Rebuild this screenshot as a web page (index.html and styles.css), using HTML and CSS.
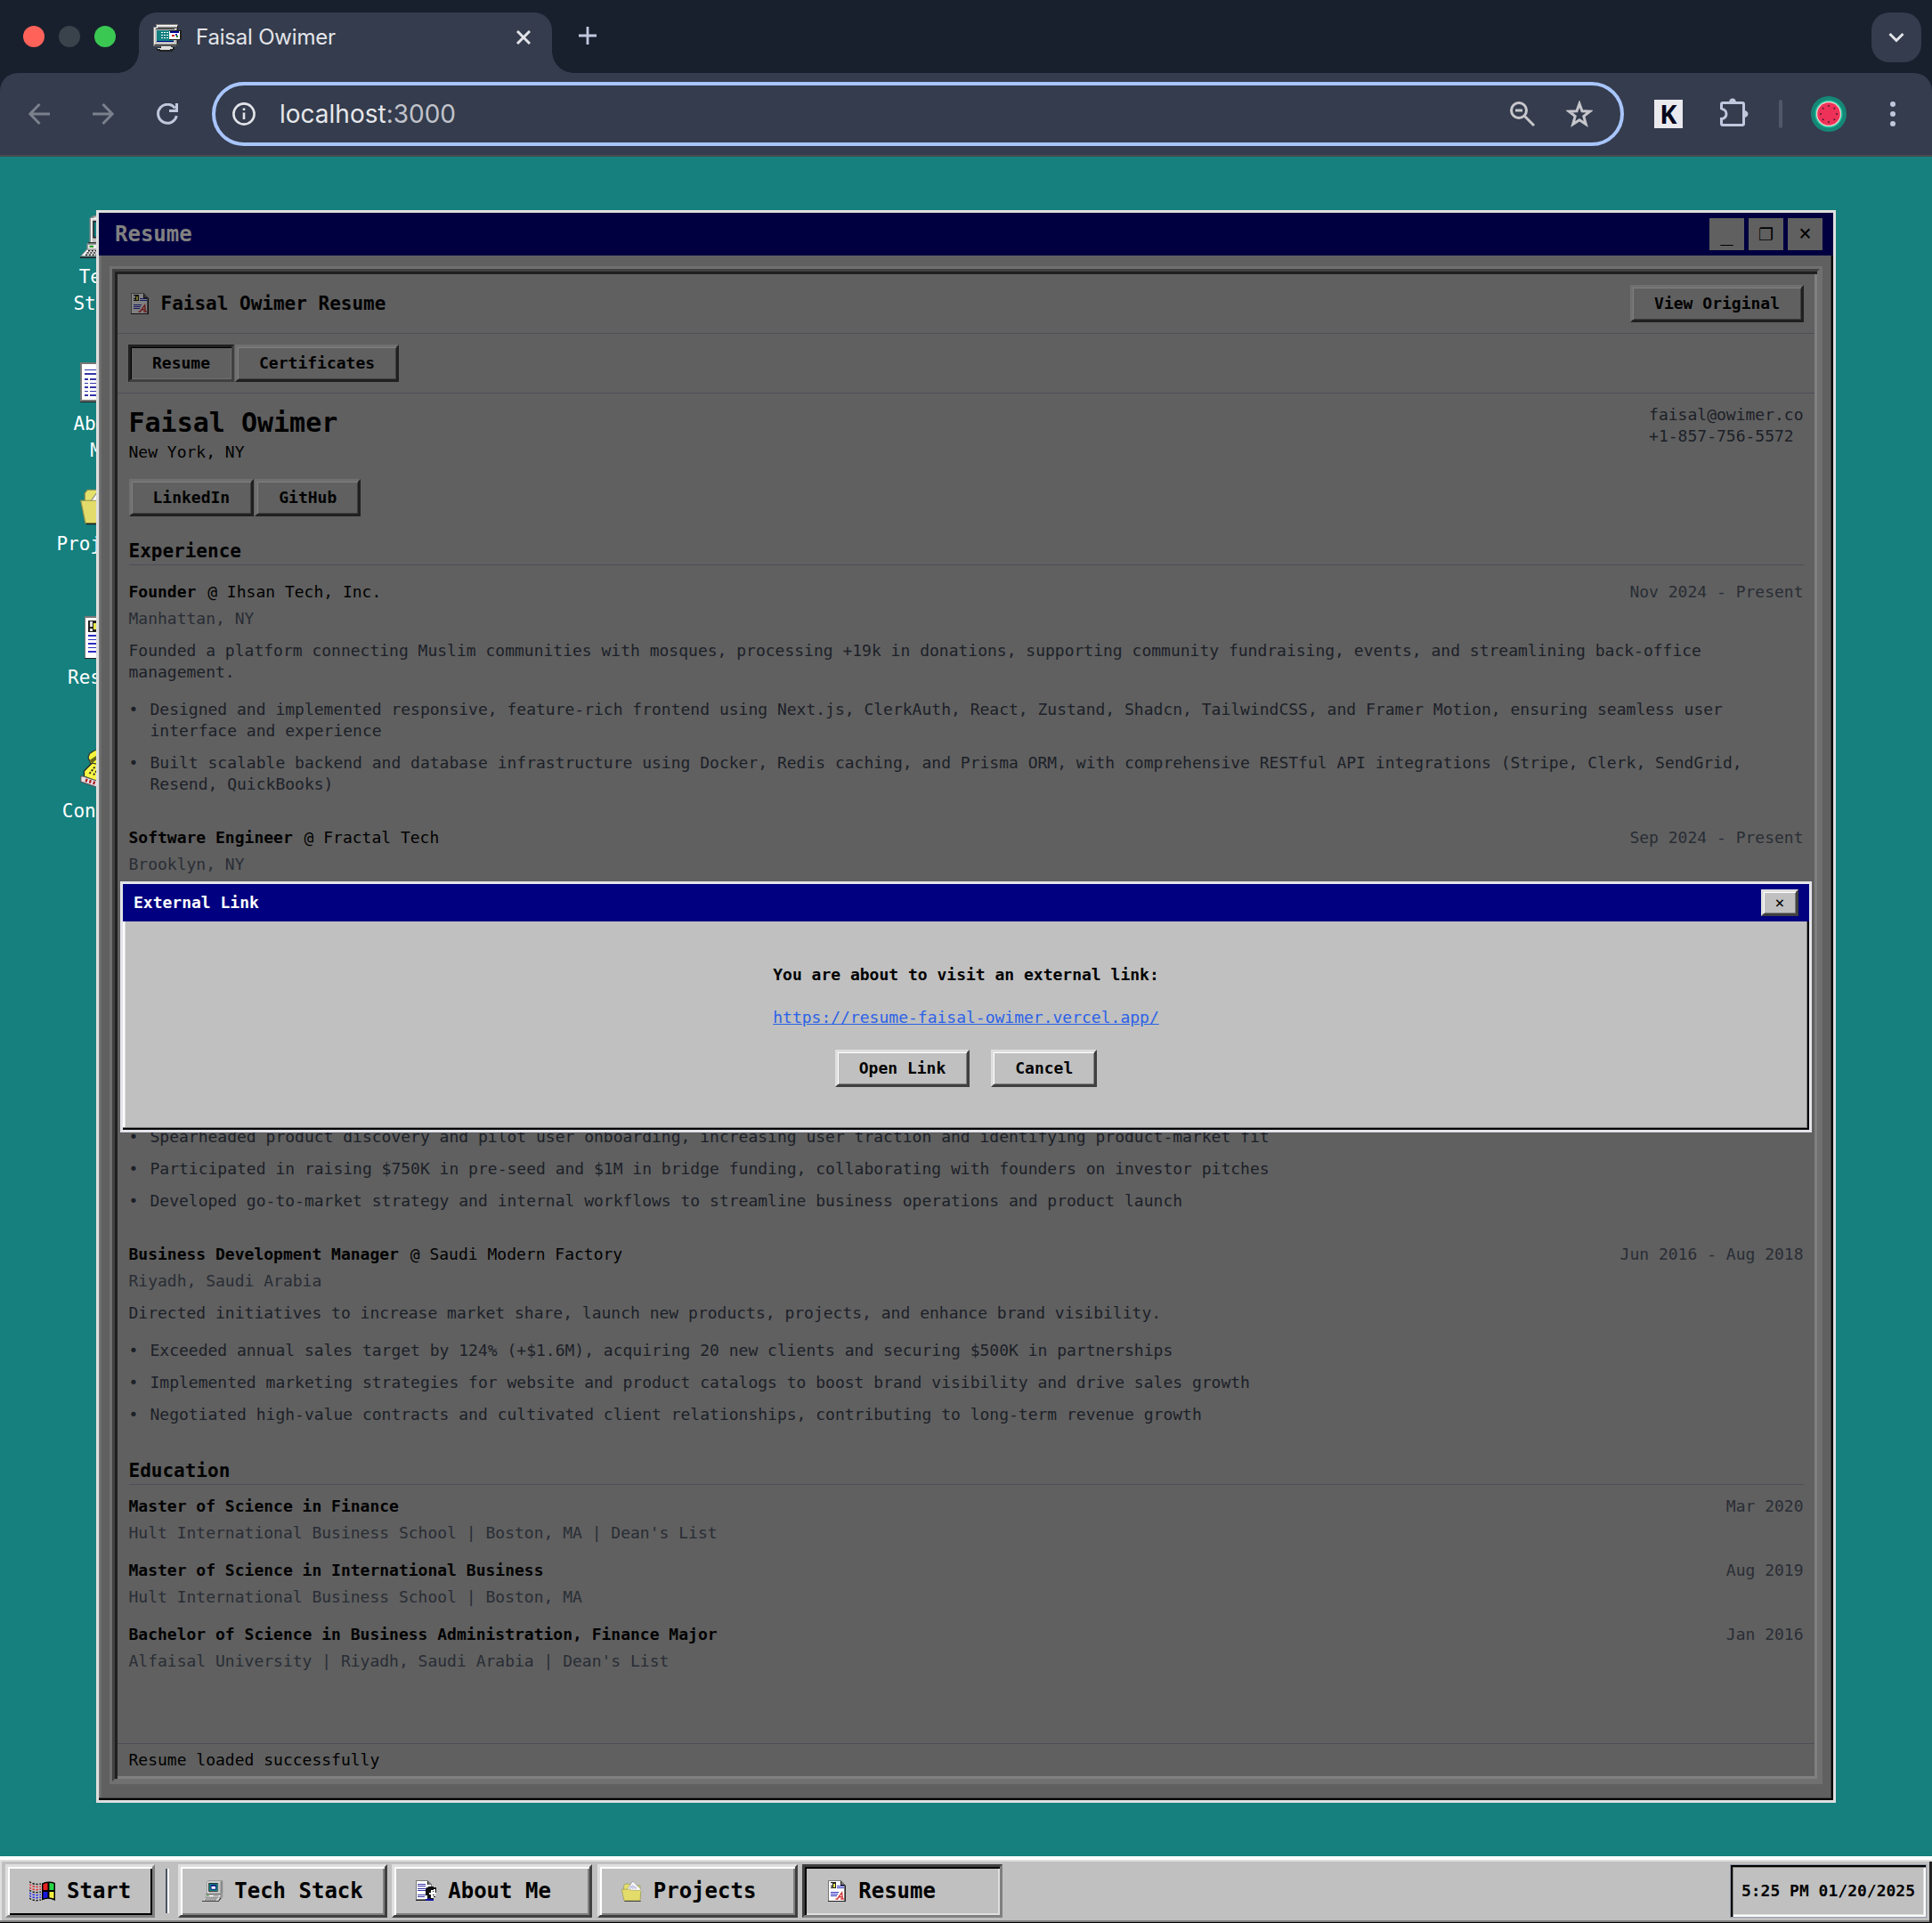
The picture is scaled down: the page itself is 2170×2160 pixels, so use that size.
FILE: index.html
```html
<!DOCTYPE html>
<html lang="en">
<head>
<meta charset="utf-8">
<title>Faisal Owimer</title>
<link rel="stylesheet" href="styles.css">
</head>
<body>
<svg class="sprite" aria-hidden="true">
  <symbol id="i-computer" viewBox="0 0 32 32">
    <path fill="#8a8a8a" d="M7 2l3-2h19l2 1v17l-3 3H7z"/>
    <path fill="#f4f4f4" d="M8 2h19v18H8z"/>
    <path fill="#c2c2c2" d="M9 3h18v17H9z"/>
    <path fill="#dcdcdc" d="M10 2l1-1h18l-1 1z"/>
    <path fill="#222" d="M9.500 4h14v13h-14z"/>
    <path fill="#138080" d="M10.500 5H23v11H10.500z"/>
    <path fill="#000080" d="M13 7h8v7h-8z"/><path fill="#fff" d="M14 9h6v4h-6z"/>
    <path fill="#333" d="M6 20h22v1H6z"/>
    <path fill="#999" d="M5 21h23l3-4v8l-3 4H5z"/>
    <path fill="#ececec" d="M6 22h21v3H6z"/><path fill="#2a9c2a" d="M7 22.500h3v1.500H7z"/><path fill="#777" d="M17 23h8v1h-8z"/>
    <path fill="#f0f0f0" stroke="#888" stroke-width=".6" d="M5 25.500h22l-3 5H0.500z"/>
    <path fill="none" stroke="#222" stroke-width="1" stroke-dasharray="1.500 1" d="M6 26.500h18M5 28h18M4 29.500h17"/>
    <path fill="#222" d="M0 31h24l4-5.500v2L24.500 32H0z"/>
  </symbol>
  <symbol id="i-about" viewBox="0 0 32 32" shape-rendering="crispEdges">
    <path fill="#777" d="M0 0h18l6 6v23H0z"/>
    <path fill="#fff" d="M1 1h16v6h6v21H1z"/><path fill="#222" d="M17 1h1v5h6v1h-7zM0 29h20v1H0z"/>
    <path fill="#3434a8" d="M3 5h11v1H3zM3 8h12v1H3zM3 12h3v1H3zM7 12h10v1H7zM3 15h3v1H3zM7 15h8v1H7zM3 18h3v1H3zM7 18h7v1H7zM3 21h3v1H3zM7 21h7v1H7zM3 24h3v1H3zM7 24h6v1H7z"/>
    <path fill="#111" d="M18 9h8v1h4v3h1v6h-2v6h-3v3h-9v-5h-3V13h2v-2h2z"/>
    <path fill="#fff" d="M23 14h4v-1h2v5h2v2h-2v4h-3v2h-4v-5h-2v-3h3z"/><path fill="#222" d="M25 16h2v1h-2zM25 21h3v1h-3z"/>
    <path fill="#1414a0" d="M15 28h3v-1h3v1h6v2H15z"/>
  </symbol>
  <symbol id="i-folder" viewBox="0 0 32 32">
    <path fill="#e4e06c" stroke="#8c8c50" stroke-width=".8" d="M3.500 8l2-2.500h7l2 2.500H28v20H3.500z"/>
    <path fill="#fff" stroke="#888" stroke-width=".8" d="M8 14L17 1.500l14 14-3 5H8z"/>
    <path fill="none" stroke="#4444a0" stroke-width="1" stroke-dasharray="1 1" d="M14 8h6M13 10h9M12 12h12"/>
    <path fill="#e3dc6a" stroke="#95924a" stroke-width=".8" d="M.5 13.500h12l2 1.500h14.500l-1 15.500H4z"/>
    <path fill="#222" d="M4 30.500h25v1H5z"/>
  </symbol>
  <symbol id="i-resume" viewBox="0 0 32 32" shape-rendering="crispEdges">
    <path fill="#777" d="M3 0h19l7 7v24H3z"/><path fill="#fff" d="M4 1h18v6h5v24H4z"/>
    <path fill="#222" d="M21 1h2v5h5v2h-7zM3 31h26v1H3zM28 8h1v23h-1z"/>
    <path fill="#222" d="M6 3h9v9H6z"/><path fill="#ddd" d="M7 4h2v4H7zM7 9h2v2H7z"/><path fill="#e8e84c" d="M10 5h3v5h-3z"/>
    <path fill="#2c2cc0" d="M16 8h10v1H16zM16 11h10v1H16zM6 14h20v1H6zM6 17h12v1H6zM6 20h11v1H6zM6 23h10v1H6zM6 26h8v1H6z"/>
    <path shape-rendering="auto" fill="none" stroke="#d43838" stroke-width="1.800" d="M16.500 28l7-9.500 1 9.500M14 28h4M21.500 28h5M19 25h5"/>
  </symbol>
  <symbol id="i-phone" viewBox="0 0 32 32">
    <path fill="#f4f43c" stroke="#333" stroke-width=".8" d="M6 6l1-3 4-2.500h11l7 5-1 6-5-1-3-3-6 1-2 3-4-1z"/>
    <path fill="#66661a" d="M7 8l6-4v3l-4 3z"/>
    <path fill="#f7f545" stroke="#222" stroke-width=".8" d="M9 10l16 4 3 11-5 3L3 20v-4z"/>
    <path fill="none" stroke="#222" stroke-width="1.200" stroke-dasharray="1.500 1" d="M11 13l-4 5M14 14l-4 5M17 15l-4 5"/>
    <path fill="#e6e0e6" stroke="#555" stroke-width=".8" d="M.5 20h2l21 7 6-2v3l-7 3.500L.5 24z"/>
    <path fill="none" stroke="#b01c1c" stroke-width="2.500" stroke-dasharray="1.500 1.500" d="M4 22.800l16 5.200"/>
  </symbol>
  <symbol id="i-windows" viewBox="0 0 30 24">
    <path fill="#000" d="M14 3.500Q21 0 29 3v20Q21 19 14 22.500z"/>
    <path fill="#e82020" d="M15.500 4.500q2.500-1.500 5-1.500v8h-5z"/><path fill="#28d848" d="M22.500 3q3 0 5 1v7h-5z"/>
    <path fill="#1818e0" d="M15.500 13h5v6.500q-2.500 0-5 1z"/><path fill="#f4f040" d="M22.500 13h5v7.500q-2.500-1-5-1z"/>
    <path fill="none" stroke="#222" stroke-width="1.500" stroke-dasharray="2.500 1.500" d="M0 1.500q5 4 13 2.500M0 11q5 4 13 2M0 20q5 4 13 2"/>
    <path fill="none" stroke="#e83030" stroke-width="1.500" stroke-dasharray="2.500 1.500" d="M0 4.500q5 4 13 2.500M0 8q5 4 13 2"/>
    <path fill="none" stroke="#2828e8" stroke-width="1.500" stroke-dasharray="2.500 1.500" d="M0 14q5 4 13 2M0 17q5 4 13 2"/>
  </symbol>
</svg>

<header class="browser">
  <div class="tabstrip">
    <div class="lights"><i class="light light-red"></i><i class="light light-off"></i><i class="light light-green"></i></div>
    <div class="tab">
      <svg class="favicon" viewBox="0 0 32 32" shape-rendering="crispEdges">
        <path fill="#777" d="M0 4h3V1h25v24h-2v1H0z"/><path fill="#eee" d="M1 5h3V2h23v2H5v2H2v18H1z"/><path fill="#c4c4c4" d="M2 6h24v18H2z"/><path fill="#222" d="M3 6h21v1H3zM2 24h25v1H2zM27 3h1v21h-1z"/>
        <path fill="#000080" d="M4 8h19v13H4z"/><path fill="#138080" d="M4 8h19v12H4z"/>
        <path fill="none" stroke="#fff" stroke-width="1" stroke-dasharray="2 1" d="M9 10.500h8M9 13.500h8M9 16.500h8"/>
        <path fill="#222" d="M18 8h14v11H18z"/><path fill="#fff" d="M18 9h12v9H18z"/><path fill="#000090" d="M19 9h10v2H19z"/>
        <path fill="#c22" d="M21 13h3v2h-3z"/><path fill="#22a" d="M25 12h2v2h-2z"/><path fill="#282" d="M26 14h2v2h-2z"/>
        <path fill="#222" d="M8 26h14v1h2v3h-2v2H7v-1H4v-3h4z"/><path fill="#ddd" d="M9 26h11v1h2v2h-3v1H8v-1H5v-1h4z"/>
      </svg>
      <span class="tab-title">Faisal Owimer</span>
      <svg class="tab-close" viewBox="0 0 16 16"><path d="M1 1l14 14M15 1L1 15"/></svg>
    </div>
    <svg class="tab-new" viewBox="0 0 20 20"><path d="M10 0v20M0 10h20"/></svg>
    <div class="tab-search"><svg viewBox="0 0 18 12"><path d="M1.500 2L9 9.500 16.500 2"/></svg></div>
  </div>
  <div class="toolbar">
    <svg class="nav-icon dim" viewBox="0 0 24 24"><path d="M24 12H2M12.500 1L1.800 12l10.700 11"/></svg>
    <svg class="nav-icon dim" viewBox="0 0 24 24"><path d="M0 12h22M11.500 1l10.700 11L11.500 23"/></svg>
    <svg class="nav-icon" viewBox="0 0 24 24"><path d="M22.300 14.200A10.500 10.500 0 1 1 20.500 5.500M14 8.500h8.500V0"/></svg>
    <div class="omnibox">
      <svg class="info" viewBox="0 0 26 26"><circle cx="13" cy="13" r="11.600"/><path d="M13 11.500v7.500M13 6.500v2.600"/></svg>
      <span class="url">localhost<span class="port">:3000</span></span>
      <svg class="zoom" viewBox="0 0 28 28"><circle cx="10" cy="10" r="8.500"/><path d="M16 16l11 11M6 10h8"/></svg>
      <svg class="star" viewBox="0 0 30 30"><path d="M15 3.500l3 8.300 8.600.4-6.800 5.400 2.500 8.900L15 21.700l-7.300 4.800 2.500-8.900-6.800-5.400 8.600-.4z"/></svg>
    </div>
    <div class="ext-k">K</div>
    <svg class="puzzle" viewBox="0 0 32 32"><path d="M1.500 13V7q0-1.500 1.500-1.500h22q1.500 0 1.500 1.500v22q0 1.500-1.500 1.500H3q-1.500 0-1.500-1.500v-5.500a5.500 5.500 0 0 0 0-11"/><path class="solid" d="M10 5a4 4.500 0 0 1 8 0zM27 14a4.500 4 0 0 1 0 8z"/></svg>
    <i class="separator"></i>
    <svg class="avatar" viewBox="0 0 40 40"><circle cx="20" cy="20" r="20" fill="#158777"/><circle cx="20" cy="20" r="15.500" fill="#22c5a0"/><circle cx="20" cy="20" r="14" fill="#f2d7d2"/><circle cx="20" cy="20" r="12.800" fill="#ee3158"/><g fill="#4c1830"><circle cx="20" cy="11" r="1"/><circle cx="20" cy="29" r="1"/><circle cx="11" cy="20" r="1"/><circle cx="29" cy="20" r="1"/><circle cx="13.700" cy="13.700" r="1"/><circle cx="26.300" cy="13.700" r="1"/><circle cx="13.700" cy="26.300" r="1"/><circle cx="26.300" cy="26.300" r="1"/></g></svg>
    <svg class="kebab" viewBox="0 0 8 28"><circle cx="4" cy="3" r="3"/><circle cx="4" cy="14" r="3"/><circle cx="4" cy="25" r="3"/></svg>
  </div>
</header>

<main class="desktop">
  <div class="shortcut sc-tech"><svg><use href="#i-computer"/></svg><span>Tech<br>Stack</span></div>
  <div class="shortcut sc-about"><svg><use href="#i-about"/></svg><span>About<br>Me</span></div>
  <div class="shortcut sc-projects"><svg><use href="#i-folder"/></svg><span>Projects</span></div>
  <div class="shortcut sc-resume"><svg><use href="#i-resume"/></svg><span>Resume</span></div>
  <div class="shortcut sc-contact"><svg><use href="#i-phone"/></svg><span>Contact</span></div>

  <section class="window">
    <div class="titlebar">
      <span class="titlebar-text">Resume</span>
      <span class="win-btn">_</span><span class="win-btn win-max">❐</span><span class="win-btn">×</span>
    </div>
    <div class="frame">
      <div class="doc-head">
        <svg class="doc-icon"><use href="#i-resume"/></svg>
        <h1>Faisal Owimer Resume</h1>
        <span class="btn dark">View Original</span>
      </div>
      <div class="tabs"><span class="btn dark pressed">Resume</span><span class="btn dark">Certificates</span></div>
      <div class="content">
        <div class="person">
          <div><h2>Faisal Owimer</h2><p class="city">New York, NY</p></div>
          <div class="contact">faisal@owimer.co<br>+1-857-756-5572</div>
        </div>
        <div class="links"><span class="btn dark">LinkedIn</span><span class="btn dark">GitHub</span></div>

        <h3>Experience</h3>
        <article class="job">
          <div class="row"><span><b class="role">Founder</b> @ Ihsan Tech, Inc.</span><span class="date">Nov 2024 - Present</span></div>
          <p class="place">Manhattan, NY</p>
          <p class="desc">Founded a platform connecting Muslim communities with mosques, processing +19k in donations, supporting community fundraising, events, and streamlining back-office management.</p>
          <ul>
            <li>Designed and implemented responsive, feature-rich frontend using Next.js, ClerkAuth, React, Zustand, Shadcn, TailwindCSS, and Framer Motion, ensuring seamless user interface and experience</li>
            <li>Built scalable backend and database infrastructure using Docker, Redis caching, and Prisma ORM, with comprehensive RESTful API integrations (Stripe, Clerk, SendGrid, Resend, QuickBooks)</li>
          </ul>
        </article>
        <article class="job job-covered">
          <div class="row"><span><b class="role">Software Engineer</b> @ Fractal Tech</span><span class="date">Sep 2024 - Present</span></div>
          <p class="place">Brooklyn, NY</p>
          <ul>
            <li>Spearheaded product discovery and pilot user onboarding, increasing user traction and identifying product-market fit</li>
            <li>Participated in raising $750K in pre-seed and $1M in bridge funding, collaborating with founders on investor pitches</li>
            <li>Developed go-to-market strategy and internal workflows to streamline business operations and product launch</li>
          </ul>
        </article>
        <article class="job">
          <div class="row"><span><b class="role">Business Development Manager</b> @ Saudi Modern Factory</span><span class="date">Jun 2016 - Aug 2018</span></div>
          <p class="place">Riyadh, Saudi Arabia</p>
          <p class="desc">Directed initiatives to increase market share, launch new products, projects, and enhance brand visibility.</p>
          <ul>
            <li>Exceeded annual sales target by 124% (+$1.6M), acquiring 20 new clients and securing $500K in partnerships</li>
            <li>Implemented marketing strategies for website and product catalogs to boost brand visibility and drive sales growth</li>
            <li>Negotiated high-value contracts and cultivated client relationships, contributing to long-term revenue growth</li>
          </ul>
        </article>

        <h3 class="edu-title">Education</h3>
        <div class="school"><div class="row"><b>Master of Science in Finance</b><span class="date">Mar 2020</span></div><p class="place">Hult International Business School | Boston, MA | Dean's List</p></div>
        <div class="school"><div class="row"><b>Master of Science in International Business</b><span class="date">Aug 2019</span></div><p class="place">Hult International Business School | Boston, MA</p></div>
        <div class="school"><div class="row"><b>Bachelor of Science in Business Administration, Finance Major</b><span class="date">Jan 2016</span></div><p class="place">Alfaisal University | Riyadh, Saudi Arabia | Dean's List</p></div>
      </div>
      <div class="status">Resume loaded successfully</div>
    </div>
  </section>

  <section class="dialog">
    <div class="dialog-title"><span>External Link</span><span class="dialog-close">×</span></div>
    <div class="dialog-body">
      <b>You are about to visit an external link:</b>
      <span class="link">https://resume-faisal-owimer.vercel.app/</span>
      <div class="dialog-actions"><span class="btn">Open Link</span><span class="btn">Cancel</span></div>
    </div>
  </section>
</main>

<footer class="taskbar">
  <div class="task start"><svg><use href="#i-windows"/></svg>Start</div>
  <i class="divider"></i>
  <div class="task"><svg><use href="#i-computer"/></svg>Tech Stack</div>
  <div class="task"><svg><use href="#i-about"/></svg>About Me</div>
  <div class="task"><svg><use href="#i-folder"/></svg>Projects</div>
  <div class="task active"><svg><use href="#i-resume"/></svg>Resume</div>
  <div class="clock">5:25 PM 01/20/2025</div>
</footer>
</body>
</html>
```

FILE: styles.css
```css
* { box-sizing: border-box; }
h1, h2, h3, p, ul { margin: 0; padding: 0; }
body {
  margin: 0;
  width: 2170px;
  height: 2160px;
  overflow: hidden;
  display: flex;
  flex-direction: column;
  background: #15807e;
  font: 18px/24px "DejaVu Sans Mono", "Liberation Mono", monospace;
  color: #000;
}
svg { display: block; flex: none; }
.sprite { position: absolute; width: 0; height: 0; }

/* Browser chrome */
.browser { background: #18202e; font-family: Inter, Roboto, sans-serif; }
.tabstrip { height: 82px; display: flex; align-items: flex-start; padding-right: 12px; }
.lights { display: flex; gap: 16px; padding: 29px 26px 0; width: 156px; }
.light { width: 24px; height: 24px; border-radius: 50%; }
.light-red { background: #ff6259; }
.light-off { background: #3a424b; }
.light-green { background: #3ac852; }
.tab {
  position: relative;
  margin-top: 14px;
  width: 464px;
  height: 68px;
  padding: 0 24px 12px 16px;
  display: flex;
  align-items: center;
  background: #343c4d;
  border-radius: 20px 20px 0 0;
}
.tab::before, .tab::after { content: ""; position: absolute; bottom: 0; width: 24px; height: 24px; }
.tab::before { left: -24px; background: radial-gradient(circle at 0 0, transparent 23.5px, #343c4d 24px); }
.tab::after { right: -24px; background: radial-gradient(circle at 100% 0, transparent 23.5px, #343c4d 24px); }
.favicon { width: 32px; height: 32px; }
.tab-title { flex: 1; margin-left: 16px; font-size: 24px; line-height: 30px; color: #e3e4e9; letter-spacing: -.2px; }
.tab-close { width: 16px; height: 16px; fill: none; stroke: #e3e4e9; stroke-width: 3; }
.tab-new { width: 20px; height: 20px; margin: 30px 0 0 30px; fill: none; stroke: #c0c8de; stroke-width: 2.8; }
.tab-search {
  margin: 14px 0 0 auto;
  width: 56px;
  height: 56px;
  border-radius: 20px;
  background: #343c4d;
  display: grid;
  place-items: center;
}
.tab-search svg { width: 18px; height: 12px; fill: none; stroke: #e3e4e9; stroke-width: 3; }
.toolbar {
  height: 94px;
  padding: 10px 40px 10px 32px;
  display: flex;
  align-items: center;
  background: #343c4d;
  border-bottom: 2px solid #4a4a4f;
  border-radius: 20px 20px 0 0;
}
.nav-icon { width: 24px; height: 24px; margin-right: 48px; fill: none; stroke: #c0c8de; stroke-width: 3; }
.nav-icon.dim { stroke: #7b808d; }
.omnibox {
  width: 1586px;
  height: 72px;
  margin-left: -10px;
  padding: 0 31px 0 19px;
  border: 4px solid #a8c5fc;
  border-radius: 36px;
  display: flex;
  align-items: center;
}
.info { width: 26px; height: 26px; margin-right: 26px; fill: none; stroke: #e3e4e9; stroke-width: 2.6; }
.url { flex: 1; font-size: 28px; line-height: 36px; color: #e6e7eb; padding-left: 1px; }
.port { color: #c1c3ca; }
.zoom { width: 28px; height: 28px; margin-right: 35px; fill: none; stroke: #c6c6cb; stroke-width: 3; }
.star { width: 30px; height: 30px; fill: none; stroke: #c6c6cb; stroke-width: 3; }
.ext-k {
  width: 32px;
  height: 32px;
  margin-left: 34px;
  background: #e9e9ee;
  color: #06061c;
  font: bold 29px/31px "Open Sans", sans-serif;
  text-align: center;
}
.puzzle { width: 32px; height: 32px; margin: -4px 0 0 42px; fill: none; stroke: #c0c8de; stroke-width: 3; }
.puzzle .solid { fill: #c0c8de; stroke: none; }
.separator { width: 4px; height: 32px; margin-left: 34px; border-radius: 2px; background: #505768; }
.avatar { width: 40px; height: 40px; margin-left: 32px; }
.kebab { width: 8px; height: 28px; margin-left: 48px; fill: #c0c8de; }

/* Desktop */
.desktop { position: relative; flex: 1; background: #15807e; }
.shortcut {
  position: absolute;
  left: 54px;
  width: 120px;
  display: flex;
  flex-direction: column;
  align-items: center;
  gap: 6px;
  font-size: 21px;
  line-height: 30px;
  color: #fff;
  text-align: center;
}
.shortcut svg { width: 48px; height: 48px; }
.sc-tech { top: 66px; }
.sc-about { top: 231px; }
.sc-projects { top: 366px; }
.sc-resume { top: 516px; }
.sc-contact { top: 666px; }

/* Buttons */
.btn {
  height: 42px;
  padding: 6px 24px;
  font-weight: bold;
  white-space: nowrap;
  background: #c0c0c0;
  border: 3px solid;
  border-color: #dfdfdf #404040 #404040 #dfdfdf;
  box-shadow: inset 1px 1px #fff, inset -1px -1px #808080;
}
.btn.dark {
  background: #606060;
  border-color: #707070 #202020 #202020 #707070;
  box-shadow: inset 1px 1px #808080, inset -1px -1px #404040;
}
.btn.dark.pressed {
  border-color: #202020 #404040 #404040 #202020;
  box-shadow: inset 1px 1px #000, inset -1px -1px #707070;
}

/* Resume window */
.window {
  position: absolute;
  left: 108px;
  top: 60px;
  width: 1954px;
  height: 1789px;
  border: 3px solid #dfdfdf;
  background: #606060;
  box-shadow: inset -2px -2px #000, inset -3px -3px #404040, inset 1px 1px #808080, inset 3px 3px #6c6c6c;
  display: flex;
  flex-direction: column;
}
.titlebar {
  height: 48px;
  padding: 0 12px 0 18px;
  display: flex;
  align-items: center;
  gap: 5px;
  background: #000040;
}
.titlebar-text { flex: 1; font-size: 24px; font-weight: bold; color: #808080; }
.win-btn {
  width: 39px;
  height: 36px;
  background: #606060;
  font-size: 24px;
  line-height: 34px;
  text-align: center;
}
.win-max { font: 19px/36px "DejaVu Sans", sans-serif; }
.frame {
  flex: 1;
  margin: 15px 15px 21px;
  outline: 3px solid #707070;
  border: 3px solid;
  border-color: #404040 #707070 #707070 #404040;
  box-shadow: inset 3px 3px #202020, inset -3px -3px #808080;
  padding: 3px;
  display: flex;
  flex-direction: column;
}
.doc-head { height: 67px; padding: 0 12px 0 12.500px; display: flex; align-items: center; border-bottom: 1px solid #4d4e58; }
.doc-icon { width: 24px; height: 24px; margin-right: 12px; filter: brightness(.5); }
.doc-head h1 { flex: 1; font-size: 21px; line-height: 30px; }
.tabs { height: 67px; padding: 12px; display: flex; gap: 1px; border-bottom: 1px solid #4d4e58; }
.content { flex: 1; padding: 12px 12.500px; color: #1c2028; }
.content h2, .content h3, .content b, .city, .row { color: #000; }
.person { display: flex; justify-content: space-between; }
.person h2 { font-size: 30px; line-height: 42px; }
.links { display: flex; gap: 1px; margin: 18px 0 24px; }
.links .btn { color: #000; }
.content h3 { height: 31px; font-size: 21px; line-height: 30px; border-bottom: 1px solid #4d4e58; margin-bottom: 18px; }
.row { display: flex; justify-content: space-between; }
.role { margin-right: 2px; }
.row .date, .place { color: #292d35; }
.place { margin-top: 6px; }
.desc { margin-top: 12px; }
.job { margin-bottom: 36px; }
.job ul { list-style: none; margin-top: 18px; display: flex; flex-direction: column; gap: 12px; }
.job li { display: flex; }
.job li::before { content: "•"; width: 24px; flex: none; }
.job-covered { height: 432px; display: flex; flex-direction: column; }
.job-covered ul { margin-top: auto; }
.content .edu-title { margin-bottom: 12px; }
.school { margin-bottom: 18px; }
.status { height: 37px; padding: 6px 12.500px; border-top: 1px solid #4d4e58; }

/* External link dialog */
.dialog {
  position: absolute;
  left: 135px;
  top: 814px;
  width: 1900px;
  height: 282px;
  border: 3px solid #e3e3ea;
  background: #c0c0c0;
  box-shadow: inset -2px -2px #000, inset -3px -3px #808080, inset 2px 2px #fff, inset 3px 3px #dfdfdf;
}
.dialog-title {
  height: 42px;
  padding: 0 12px;
  display: flex;
  align-items: center;
  justify-content: space-between;
  background: #000080;
  color: #fff;
  font-weight: bold;
}
.dialog-close {
  width: 42px;
  height: 30px;
  background: #c0c0c0;
  border: 3px solid;
  border-color: #dfdfdf #404040 #404040 #dfdfdf;
  box-shadow: inset 1px 1px #fff, inset -1px -1px #808080;
  color: #000;
  font-weight: normal;
  text-align: center;
}
.dialog-body { padding: 48px 0; display: flex; flex-direction: column; align-items: center; gap: 24px; }
.link { color: #2c62e8; text-decoration: underline; }
.dialog-actions { display: flex; gap: 24px; }

/* Taskbar */
.taskbar {
  height: 75px;
  border-top: 4px solid #fff;
  background: #c0c0c0;
  box-shadow: inset 0 2px #dfdfdf, inset -3px 0 #222, inset 0 -1px #000, inset 0 -3px #808080, inset 2px 0 #dfdfdf;
  padding: 5px 6px 6px;
  display: flex;
}
.task {
  height: 60px;
  min-width: 225px;
  margin-right: 5.500px;
  padding: 0 24px;
  display: flex;
  align-items: center;
  gap: 12px;
  font-size: 24px;
  font-weight: bold;
  border: 3px solid;
  border-color: #dfdfdf #404040 #404040 #dfdfdf;
  box-shadow: inset 2px 2px #fff, inset -2px -2px #808080;
}
.task svg { width: 24px; height: 24px; }
.task.start { min-width: 0; margin-right: 12px; border-color: #dfdfdf #808080 #808080 #dfdfdf; box-shadow: inset 2px 2px #fff, inset -2px -2px #000; }
.task.start svg { width: 30px; }
.task.active { border-color: #404040 #808080 #808080 #404040; box-shadow: inset 2px 2px #000, inset -2px -2px #dfdfdf; }
.divider { width: 4px; height: 50px; margin: 5px 10px 0 0; border-left: 2px solid #4b5563; background: #fff; }
.clock {
  height: 60px;
  margin-left: auto;
  padding: 0 12px;
  border: 1px solid #949cab;
  box-shadow: inset 2px 2px #000, inset 3px 3px #808080, inset -2px -2px #fff, inset -3px -3px #dfdfdf;
  font-weight: bold;
  line-height: 58px;
}
```
